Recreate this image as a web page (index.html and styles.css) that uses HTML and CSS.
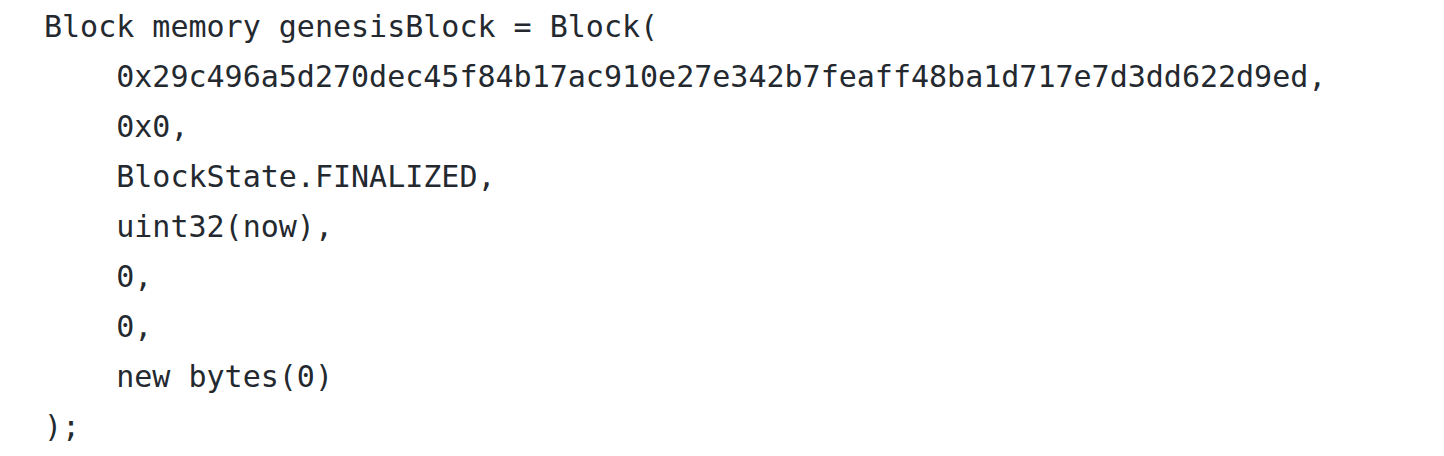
FILE: index.html
```html
<!DOCTYPE html>
<html>
<head>
<meta charset="utf-8">
<link rel="stylesheet" href="styles.css">
</head>
<body>
<pre class="code"><code>Block memory genesisBlock = Block(
    0x29c496a5d270dec45f84b17ac910e27e342b7feaff48ba1d717e7d3dd622d9ed,
    0x0,
    BlockState.FINALIZED,
    uint32(now),
    0,
    0,
    new bytes(0)
);</code></pre>
</body>
</html>
```
FILE: styles.css
```css
html, body {
  margin: 0;
  padding: 0;
  background: #ffffff;
}
.code {
  margin: 0;
  padding: 2px 0 0 44px;
  font-family: "DejaVu Sans Mono", monospace;
  font-size: 30px;
  line-height: 50px;
  color: #24292f;
}
```
